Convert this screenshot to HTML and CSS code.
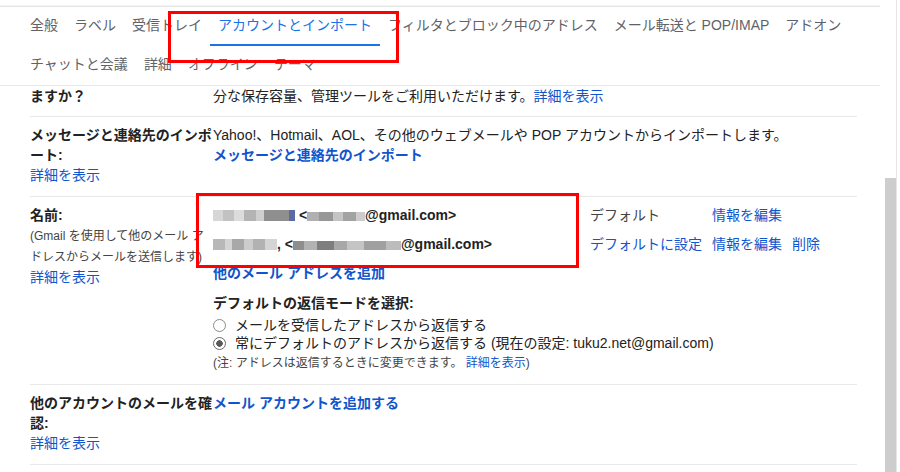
FILE: index.html
```html
<!DOCTYPE html>
<html lang="ja">
<head>
  <meta charset="UTF-8">
  <meta name="viewport" content="width=device-width, initial-scale=1.0">
  <title>設定 - アカウントとインポート</title>
<link rel="stylesheet" href="styles.css">
</head>
<body>
  <div class="window">
    <div class="main">
      <div class="tabs-bar">
        <nav class="tabs">
          <a class="tab">全般</a>
          <a class="tab">ラベル</a>
          <a class="tab">受信トレイ</a>
          <a class="tab active">アカウントとインポート</a>
          <a class="tab">フィルタとブロック中のアドレス</a>
          <a class="tab">メール転送と POP/IMAP</a>
          <a class="tab">アドオン</a>
          <a class="tab">チャットと会議</a>
          <a class="tab">詳細</a>
          <a class="tab">オフライン</a>
          <a class="tab">テーマ</a>
        </nav>
      </div>

      <div class="settings">
        <div class="row row-first">
          <div class="label"><b>ますか？</b></div>
          <div class="value">分な保存容量、管理ツールをご利用いただけます。<a class="link">詳細を表示</a></div>
        </div>

        <div class="row">
          <div class="label">
            <b>メッセージと連絡先のインポート:</b><br>
            <a class="link">詳細を表示</a>
          </div>
          <div class="value">
            Yahoo!、Hotmail、AOL、その他のウェブメールや POP アカウントからインポートします。<br>
            <a class="link strong">メッセージと連絡先のインポート</a>
          </div>
        </div>

        <div class="row">
          <div class="label">
            <b>名前:</b><br>
            <span class="small">(Gmail を使用して他のメール アドレスからメールを送信します)</span><br>
            <a class="link">詳細を表示</a>
          </div>
          <div class="value">
            <div class="addresses">
              <div class="addr">
                <span class="blur blur-name1"></span> &lt;<span class="blur blur-mail1"></span>@gmail.com&gt;
              </div>
              <div class="addr-state">デフォルト</div>
              <a class="link addr-act">情報を編集</a>
              <span></span>

              <div class="addr">
                <span class="blur blur-name2"></span>, &lt;<span class="blur blur-mail2"></span>@gmail.com&gt;
              </div>
              <a class="link addr-act">デフォルトに設定</a>
              <a class="link addr-act">情報を編集</a>
              <a class="link addr-act">削除</a>
            </div>
            <a class="link strong">他のメール アドレスを追加</a>

            <div class="reply-mode">
              <b>デフォルトの返信モードを選択:</b>
              <label class="radio"><span class="dot"></span>メールを受信したアドレスから返信する</label>
              <label class="radio"><span class="dot checked"></span>常にデフォルトのアドレスから返信する (現在の設定: tuku2.net@gmail.com)</label>
              <div class="note">(注: アドレスは返信するときに変更できます。 <a class="link">詳細を表示</a>)</div>
            </div>
          </div>
        </div>

        <div class="row">
          <div class="label">
            <b>他のアカウントのメールを確認:</b><br>
            <a class="link">詳細を表示</a>
          </div>
          <div class="value">
            <a class="link strong">メール アカウントを追加する</a>
          </div>
        </div>
      </div>
    </div>

    <div class="scrollbar"><div class="thumb"></div></div>
  </div>

  <!-- red annotation boxes -->
  <div class="mark mark-tab"></div>
  <div class="mark mark-addr"></div>
</body>
</html>
```

FILE: styles.css
```css
/* Page */
body {
  margin: 0;
  background: #fff;
  color: #222;
  font-family: "Liberation Sans", "Noto Sans CJK JP", sans-serif;
  font-size: 14px;
  line-height: 20px;
}

.window {
  display: flex;
  height: 472px;
  overflow: hidden;
}

.main {
  width: 880px;
  flex: none;
}

/* Tabs header */
.tabs-bar {
  margin-top: 6px;
  border-top: 1px solid #e6e6e6;
  box-shadow: 0 -1px 0 #f4f4f4;
  border-bottom: 1px solid #e8e8e8;
}

.tabs {
  display: flex;
  flex-wrap: wrap;
  padding-left: 22px;
}

.tab {
  box-sizing: border-box;
  height: 39px;
  padding: 8px 8px 0;
  color: #5f6368;
  white-space: nowrap;
  cursor: pointer;
}

.tab.active {
  color: #1a73e8;
  border-bottom: 2px solid #1a73e8;
}

/* Settings rows */
.settings {
  margin: 0 23px 0 30px;
}

.row {
  display: grid;
  grid-template-columns: 183px 1fr;
  padding: 8px 0 11px;
  border-bottom: 1px solid #e8e8e8;
}

.row-first {
  padding-top: 0;
  padding-bottom: 10px;
}

.label {
  line-break: loose;
  word-break: break-all;
}

.label b {
  font-weight: bold;
}

.small {
  font-size: 12px;
  color: #444;
}

.link {
  color: #15c;
  cursor: pointer;
}

.link.strong {
  font-weight: bold;
}

/* Send-as addresses */
.addresses {
  display: grid;
  grid-template-columns: 367px auto auto auto;
  column-gap: 10px;
  justify-content: start;
}

.addresses > * {
  padding-bottom: 9px;
}

.addr {
  font-weight: bold;
  white-space: nowrap;
}

.addr-state {
  color: #444;
}

.addr-act {
  white-space: nowrap;
}

/* pixelated (hidden) parts of the addresses */
.blur {
  display: inline-block;
  height: 11px;
  vertical-align: -1px;
  filter: blur(0.5px);
}

.blur-name1 {
  width: 82px;
  background: linear-gradient(90deg, #d6d6d6 0 12%, #c2c2c2 12% 26%, #dcdcdc 26% 38%, #b4b4b4 38% 52%, #cfcfcf 52% 62%, #8f8f8f 62% 93%, #5b6aa0 93% 100%);
}

.blur-mail1 {
  width: 58px;
  height: 9px;
  background: linear-gradient(90deg, #b0b0b0 0 20%, #979797 20% 45%, #c4c4c4 45% 62%, #a2a2a2 62% 85%, #cccccc 85% 100%);
}

.blur-name2 {
  width: 64px;
  background: linear-gradient(90deg, #b8b8b8 0 18%, #d4d4d4 18% 30%, #a8a8a8 30% 48%, #cccccc 48% 62%, #b2b2b2 62% 82%, #d4d4d4 82% 100%);
}

.blur-mail2 {
  width: 108px;
  height: 9px;
  background: linear-gradient(90deg, #8e8e8e 0 10%, #b2b2b2 10% 22%, #7e7e7e 22% 38%, #a8a8a8 38% 50%, #c4c4c4 50% 66%, #a0a0a0 66% 86%, #bcbcbc 86% 100%);
}

/* Reply mode */
.reply-mode {
  margin-top: 10px;
}

.reply-mode b {
  display: block;
}

.radio {
  display: flex;
  align-items: center;
  line-height: 18px;
  color: #222;
}

.radio:first-of-type {
  margin-top: 3px;
}

.dot {
  box-sizing: border-box;
  width: 13px;
  height: 13px;
  margin-right: 9px;
  border: 1px solid #8a8a8a;
  border-radius: 50%;
  flex: none;
}

.dot.checked {
  border-color: #6a6a6a;
  background: radial-gradient(circle, #5a5a5a 0 3px, #fff 3.5px);
}

.note {
  margin-top: 1px;
  font-size: 12px;
  color: #444;
}

/* Scrollbar */
.scrollbar {
  width: 11px;
  margin-left: 5px;
  border-right: 1px solid #e6e6e6;
}

.thumb {
  margin-top: 178px;
  height: 300px;
  background: #cdcdcd;
}

/* Red annotation boxes */
.mark {
  position: absolute;
  box-sizing: border-box;
  border: 3px solid #f00;
}

.mark-tab {
  left: 168px;
  top: 11px;
  width: 231px;
  height: 52px;
}

.mark-addr {
  left: 196px;
  top: 193px;
  width: 383px;
  height: 75px;
}
```
